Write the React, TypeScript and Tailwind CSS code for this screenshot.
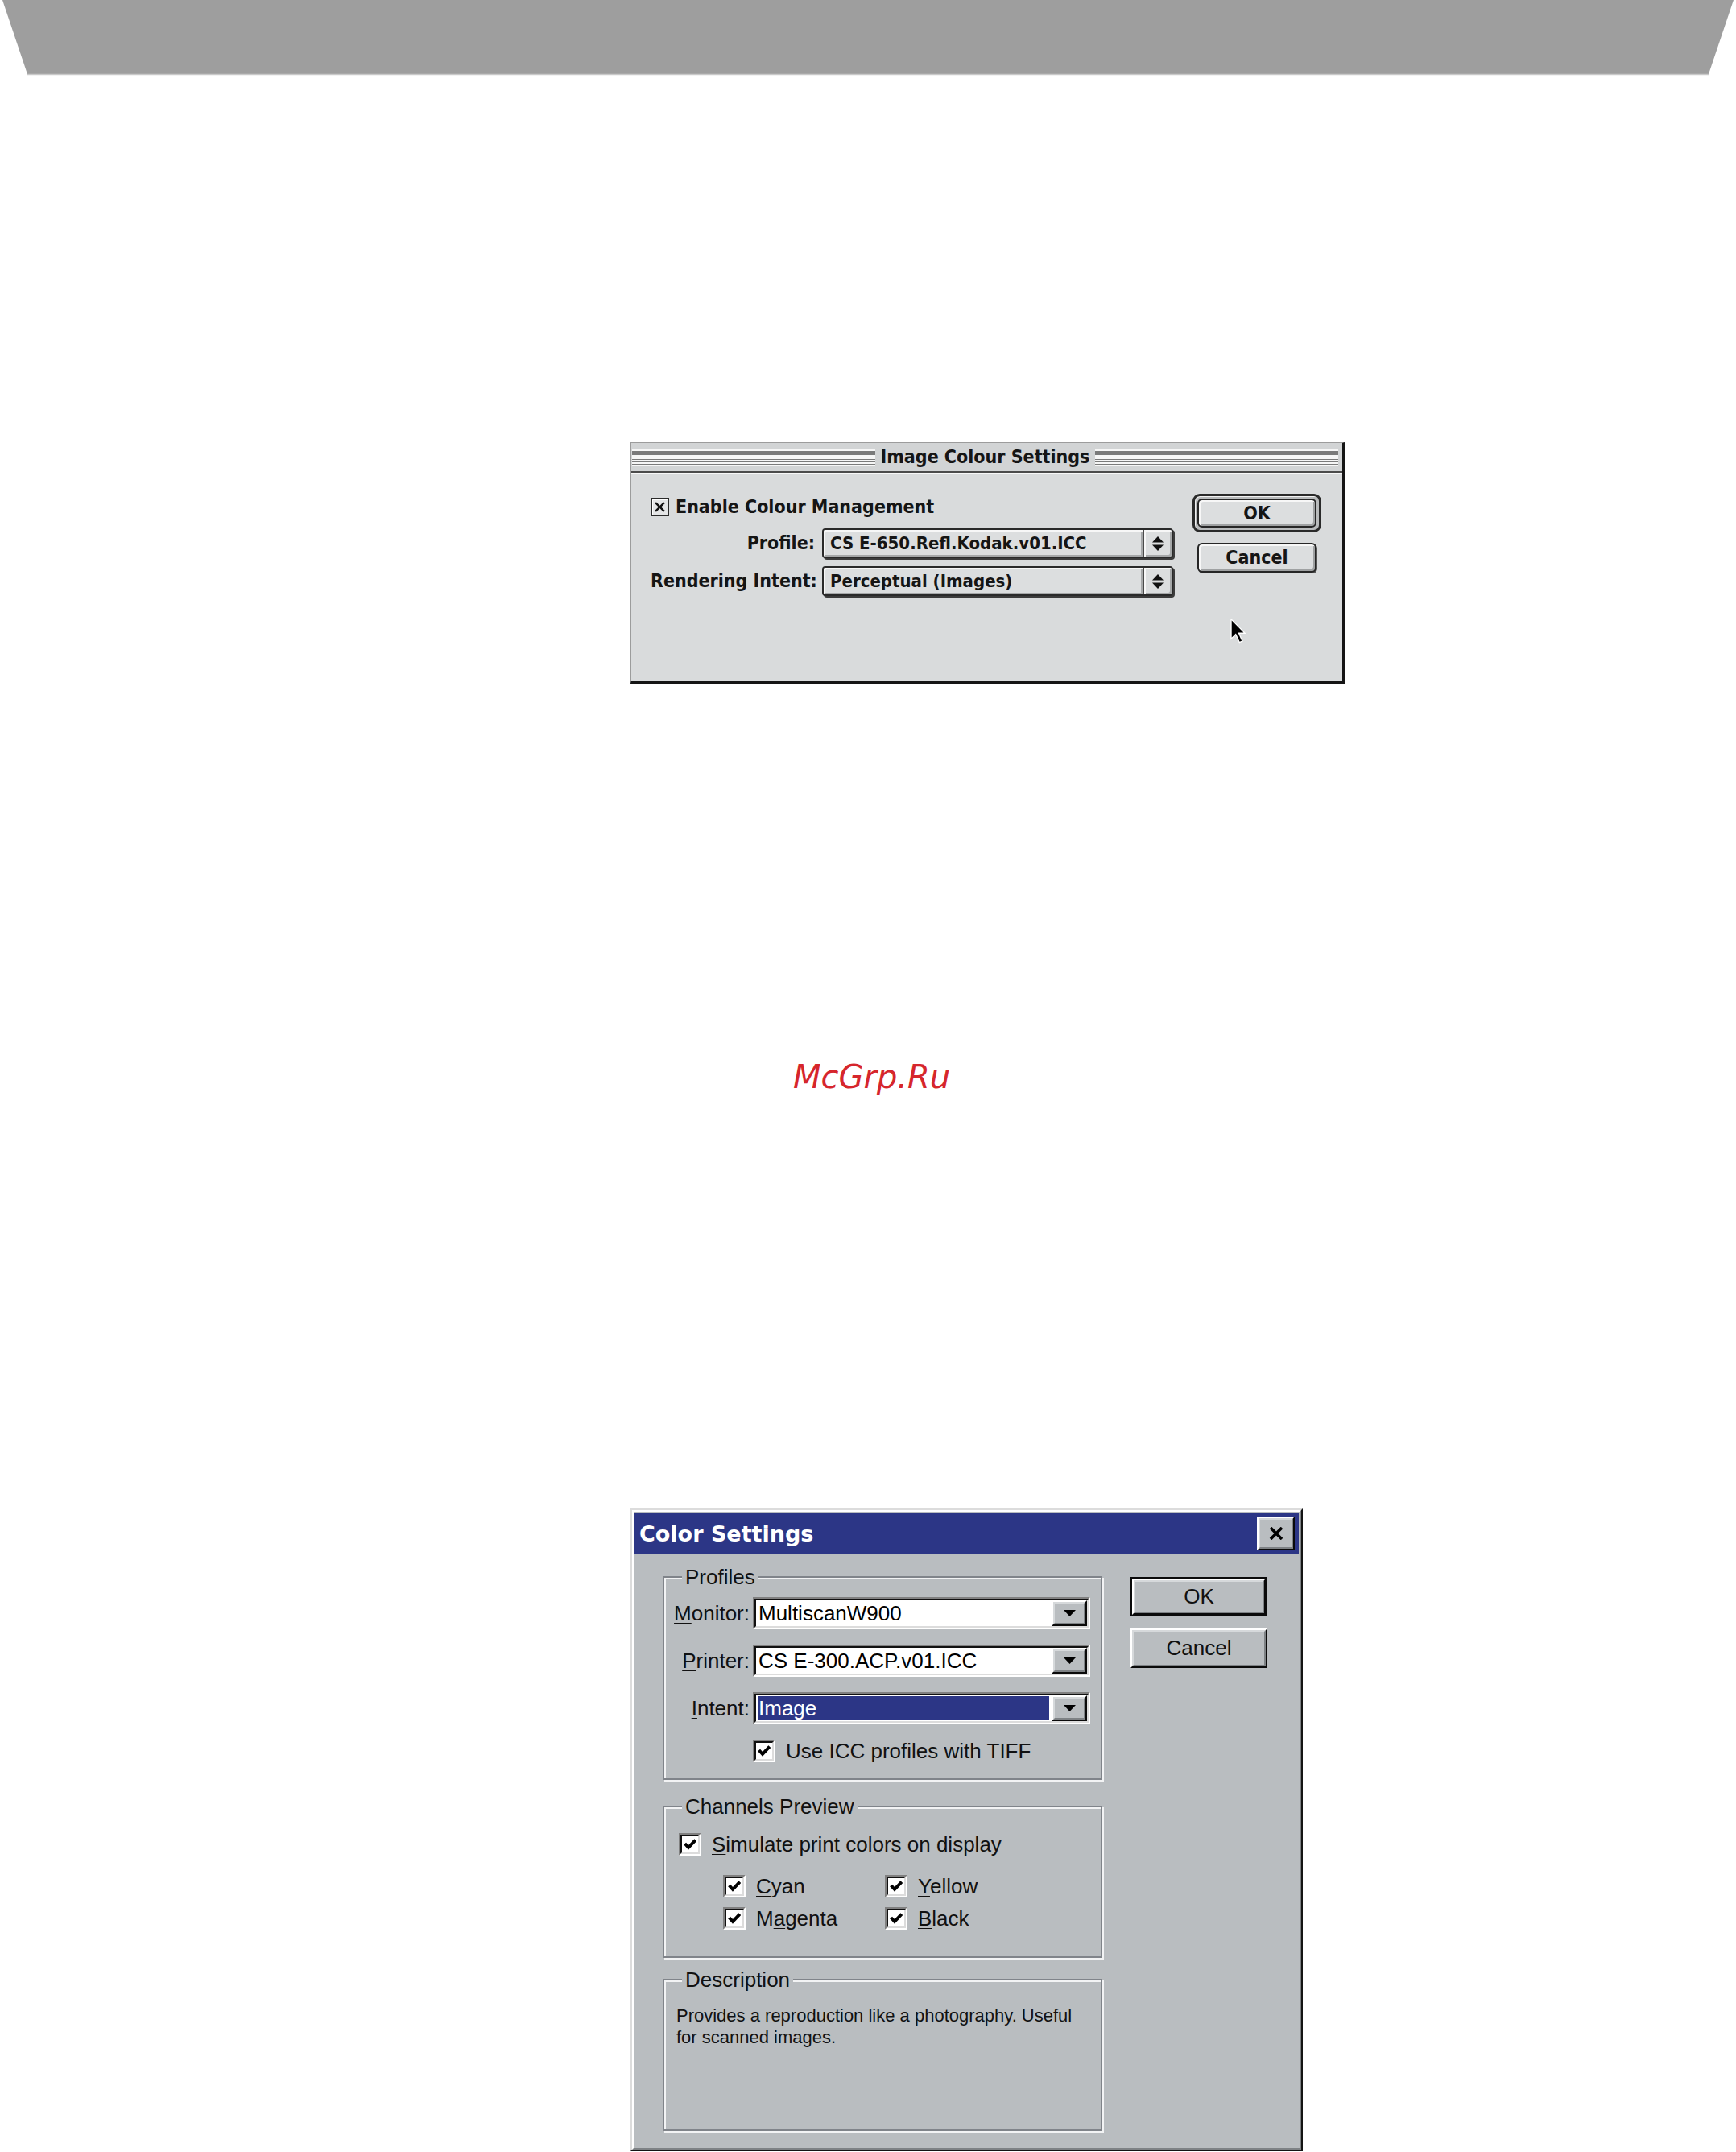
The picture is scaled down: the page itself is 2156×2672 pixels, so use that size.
import React from "react";

const macFont = "font-['DejaVu_Sans_Condensed','DejaVu_Sans',sans-serif] [font-stretch:condensed] font-bold";
const winFont = "font-['Liberation_Sans',Arial,sans-serif]";

function Banner() {
  return (
    <svg width="2156" height="94" viewBox="0 0 2156 94" className="block shrink-0">
      <polygon points="3,0 2153,0 2122,92 34,92" fill="#9e9e9e" />
      <line x1="34" y1="92.5" x2="2122" y2="92.5" stroke="#c9c9c9" strokeWidth="1.5" />
    </svg>
  );
}

/* ---------- Mac OS dialog ---------- */

function MacCheckbox() {
  return (
    <span className="flex h-[23px] w-[23px] shrink-0 items-center justify-center border-2 border-[#2b2b2b] bg-[#e4e5e6] shadow-[inset_1px_1px_0_#ffffff]">
      <svg viewBox="0 0 12 12" className="h-[13px] w-[13px]">
        <path d="M1 1 L11 11 M11 1 L1 11" stroke="#111" strokeWidth="2.2" fill="none" />
      </svg>
    </span>
  );
}

function MacPopup({ value }: { value: string }) {
  return (
    <div className="flex h-[37px] w-[436px] rounded-[4px] border-2 border-[#2a2a2a] bg-[#dcdedf] shadow-[2px_2px_0_#3c3c3c]">
      <div className="flex flex-1 items-center rounded-l-[2px] pl-[8px] text-[22px] text-[#151515] shadow-[inset_2px_2px_0_#f7f7f7,inset_-2px_-2px_0_#a6a8a9]">
        {value}
      </div>
      <div className="flex w-[36px] items-center justify-center rounded-r-[2px] border-l-2 border-[#4a4a4a] shadow-[inset_2px_2px_0_#f7f7f7,inset_-2px_-2px_0_#a6a8a9]">
        <svg viewBox="0 0 14 18" className="h-[18px] w-[14px]">
          <path d="M7 0 L14 7.5 L0 7.5 Z" fill="#111" />
          <path d="M0 10.5 L14 10.5 L7 18 Z" fill="#111" />
        </svg>
      </div>
    </div>
  );
}

function MacButton({ label }: { label: string }) {
  return (
    <div className="flex h-[37px] w-[148px] items-center justify-center rounded-[6px] border-2 border-[#262626] bg-[#dcdedf] text-[23px] text-[#151515] shadow-[inset_2px_2px_0_#f7f7f7,inset_-2px_-2px_0_#9fa1a2,1px_1px_0_#555]">
      {label}
    </div>
  );
}

function MacDialog() {
  return (
    <div className={`relative ml-[783px] mt-[455px] w-[887px] border-l border-t border-[#9c9c9c] border-b-[4px] border-r-[3px] border-b-[#151515] border-r-[#151515] bg-[#d9dbdc] ${macFont}`}>
      {/* title bar */}
      <div className="flex h-[37px] items-center gap-[7px] border-b-2 border-[#4b4b4b] bg-[#d2d4d5] pl-[1px] pr-[5px]">
        <div className="h-[22px] flex-1 bg-[image:repeating-linear-gradient(180deg,#7a7a7a_0px,#7a7a7a_1.3px,#f6f6f6_1.3px,#f6f6f6_3.2px)]" />
        <span className="text-[23px] leading-none text-[#151515]">Image Colour Settings</span>
        <div className="h-[22px] flex-1 bg-[image:repeating-linear-gradient(180deg,#7a7a7a_0px,#7a7a7a_1.3px,#f6f6f6_1.3px,#f6f6f6_3.2px)]" />
      </div>

      {/* body */}
      <div className="flex h-[258px] border-t-2 border-[#f8f8f8] pl-[24px]">
        <div className="grid grid-cols-[204px_436px] content-start items-center gap-x-[9px] gap-y-[10px] pt-[29px]">
          <div className="col-span-2 mb-[6px] flex h-[22px] items-center gap-[8px]">
            <MacCheckbox />
            <span className="text-[23px] leading-none text-[#151515]">Enable Colour Management</span>
          </div>
          <span className="text-right text-[23px] leading-none text-[#151515]">Profile:</span>
          <MacPopup value="CS E-650.Refl.Kodak.v01.ICC" />
          <span className="whitespace-nowrap text-right text-[23px] leading-none text-[#151515]">Rendering Intent:</span>
          <MacPopup value="Perceptual (Images)" />
        </div>

        <div className="ml-[24px] flex flex-col items-center pt-[24px]">
          <div className="rounded-[9px] border-[3px] border-[#2a2a2a] bg-[#b9bbbc] p-[3px] shadow-[inset_1px_1px_0_#f0f0f0]">
            <div className="flex h-[36px] w-[148px] items-center justify-center rounded-[6px] border-2 border-[#262626] bg-[#dcdedf] text-[23px] text-[#151515] shadow-[inset_2px_2px_0_#f7f7f7,inset_-2px_-2px_0_#9fa1a2]">
              OK
            </div>
          </div>
          <div className="mt-[13px]">
            <MacButton label="Cancel" />
          </div>
        </div>
      </div>

      {/* mouse pointer */}
      <svg viewBox="0 0 12 19" className="absolute left-[744px] top-[218px] h-[31px] w-[20px]">
        <path d="M0.5 0.5 L0.5 15.5 L4 12 L6.8 18.2 L9 17.2 L6.3 11.2 L11 11.2 Z" fill="#000" stroke="#fff" strokeWidth="0.8" />
      </svg>
    </div>
  );
}

/* ---------- Windows dialog ---------- */

function U({ children }: { children: React.ReactNode }) {
  return <span className="underline decoration-1 underline-offset-[3px]">{children}</span>;
}

function WinCheck() {
  return (
    <span className="flex h-[28px] w-[28px] shrink-0 border-2 border-b-white border-l-[#808080] border-r-white border-t-[#808080]">
      <span className="flex flex-1 items-center justify-center border-2 border-b-[#dcdcdc] border-l-[#111] border-r-[#dcdcdc] border-t-[#111] bg-white">
        <svg viewBox="0 0 8 7" className="h-[14px] w-[16px]">
          <path d="M0.8 3 L3 5.4 L7.4 0.8" stroke="#000" strokeWidth="2" fill="none" />
        </svg>
      </span>
    </span>
  );
}

function Raised({ className, children }: { className: string; children: React.ReactNode }) {
  return (
    <div className={`flex border-2 border-b-[#0a0a0a] border-l-white border-r-[#0a0a0a] border-t-white ${className}`}>
      <div className="flex flex-1 items-center justify-center border-2 border-b-[#7e8285] border-l-[#d6d9db] border-r-[#7e8285] border-t-[#d6d9db] bg-[#b9bdc0]">
        {children}
      </div>
    </div>
  );
}

function DropButton() {
  return (
    <Raised className="w-[44px] shrink-0">
      <svg viewBox="0 0 15 8" className="h-[8px] w-[15px]">
        <path d="M0 0 L15 0 L7.5 8 Z" fill="#000" />
      </svg>
    </Raised>
  );
}

function WinCombo({ value, selected }: { value: string; selected?: boolean }) {
  return (
    <div className="flex h-[40px] w-[419px] border-2 border-b-white border-l-[#808080] border-r-white border-t-[#808080]">
      <div className="flex flex-1 items-stretch border-2 border-b-[#dcdcdc] border-l-[#111] border-r-[#dcdcdc] border-t-[#111] bg-white">
        {selected ? (
          <div className="my-[1px] ml-[2px] mr-[3px] flex flex-1 items-center bg-[#2c3686] text-white">
            <span className="pl-[1px]">{value}</span>
          </div>
        ) : (
          <div className="flex flex-1 items-center pl-[3px] text-black">{value}</div>
        )}
        <DropButton />
      </div>
    </div>
  );
}

function Group({ title, className, children }: { title: string; className: string; children: React.ReactNode }) {
  return (
    <fieldset className={`w-[546px] border-2 border-[#80848a] shadow-[inset_2px_2px_0_#f2f3f4,2px_2px_0_#f2f3f4] ${className}`}>
      <legend className="ml-[22px] bg-[#b9bdc0] px-[4px] text-[26px] leading-[28px] text-[#111]">{title}</legend>
      {children}
    </fieldset>
  );
}

function WinDialog() {
  return (
    <div className={`ml-[783px] mt-[516px] w-[835px] border-2 border-b-[#141414] border-l-[#dcdcdc] border-r-[#141414] border-t-[#dcdcdc] ${winFont}`}>
      <div className="border-2 border-b-[#7e8285] border-l-white border-r-[#7e8285] border-t-white bg-[#b9bdc0] p-[1px]">
        {/* caption */}
        <div className="flex h-[52px] items-center justify-between bg-[#2c3686] pl-[6px] pr-[5px]">
          <span className="font-['DejaVu_Sans',sans-serif] text-[27px] font-bold leading-none text-white">Color Settings</span>
          <Raised className="h-[42px] w-[47px]">
            <svg viewBox="0 0 18 16" className="h-[16px] w-[18px]">
              <path d="M2 1 L16 15 M16 1 L2 15" stroke="#000" strokeWidth="3.6" fill="none" />
            </svg>
          </Raised>
        </div>

        {/* client area */}
        <div className="flex pb-[20px] text-[26px] text-[#111]">
          <div className="flex flex-col pl-[35px] pt-[14px]">
            <Group title="Profiles" className="pb-[20px] pt-[11px]">
              <div className="grid grid-cols-[110px_419px] items-center gap-y-[19px]">
                <span className="pr-[4px] text-right"><U>M</U>onitor:</span>
                <WinCombo value="MultiscanW900" />
                <span className="pr-[4px] text-right"><U>P</U>rinter:</span>
                <WinCombo value="CS E-300.ACP.v01.ICC" />
                <span className="pr-[4px] text-right"><U>I</U>ntent:</span>
                <WinCombo value="Image" selected />
                <span />
                <div className="flex h-[28px] items-center gap-[13px]">
                  <WinCheck />
                  <span>Use ICC profiles with <U>T</U>IFF</span>
                </div>
              </div>
            </Group>

            <Group title="Channels Preview" className="mt-[19px] pb-[33px] pt-[19px]">
              <div className="flex h-[28px] items-center gap-[13px] pl-[18px]">
                <WinCheck />
                <span><U>S</U>imulate print colors on display</span>
              </div>
              <div className="mt-[24px] grid grid-cols-[201px_201px] gap-y-[12px] pl-[73px]">
                <div className="flex h-[28px] items-center gap-[13px]">
                  <WinCheck />
                  <span><U>C</U>yan</span>
                </div>
                <div className="flex h-[28px] items-center gap-[13px]">
                  <WinCheck />
                  <span><U>Y</U>ellow</span>
                </div>
                <div className="flex h-[28px] items-center gap-[13px]">
                  <WinCheck />
                  <span>M<U>a</U>genta</span>
                </div>
                <div className="flex h-[28px] items-center gap-[13px]">
                  <WinCheck />
                  <span><U>B</U>lack</span>
                </div>
              </div>
            </Group>

            <Group title="Description" className="mt-[13px] h-[202px] pt-[17px]">
              <p className="pl-[15px] text-[22px] leading-[27px] text-[#111]">
                Provides a reproduction like a photography. Useful
                <br />
                for scanned images.
              </p>
            </Group>
          </div>

          <div className="ml-[35px] flex flex-col pt-[28px]">
            <div className="border-2 border-[#0a0a0a]">
              <Raised className="h-[45px] w-[166px]">
                <span>OK</span>
              </Raised>
            </div>
            <Raised className="mt-[15px] h-[49px] w-[170px]">
              <span>Cancel</span>
            </Raised>
          </div>
        </div>
      </div>
    </div>
  );
}

export default function App() {
  return (
    <div className="flex h-[2672px] w-[2156px] flex-col items-start overflow-hidden bg-white">
      <Banner />
      <MacDialog />
      <p className="ml-[985px] mt-[468px] font-['DejaVu_Sans',sans-serif] text-[40px] italic leading-[40px] text-[#d6262c]">
        McGrp.Ru
      </p>
      <WinDialog />
    </div>
  );
}
